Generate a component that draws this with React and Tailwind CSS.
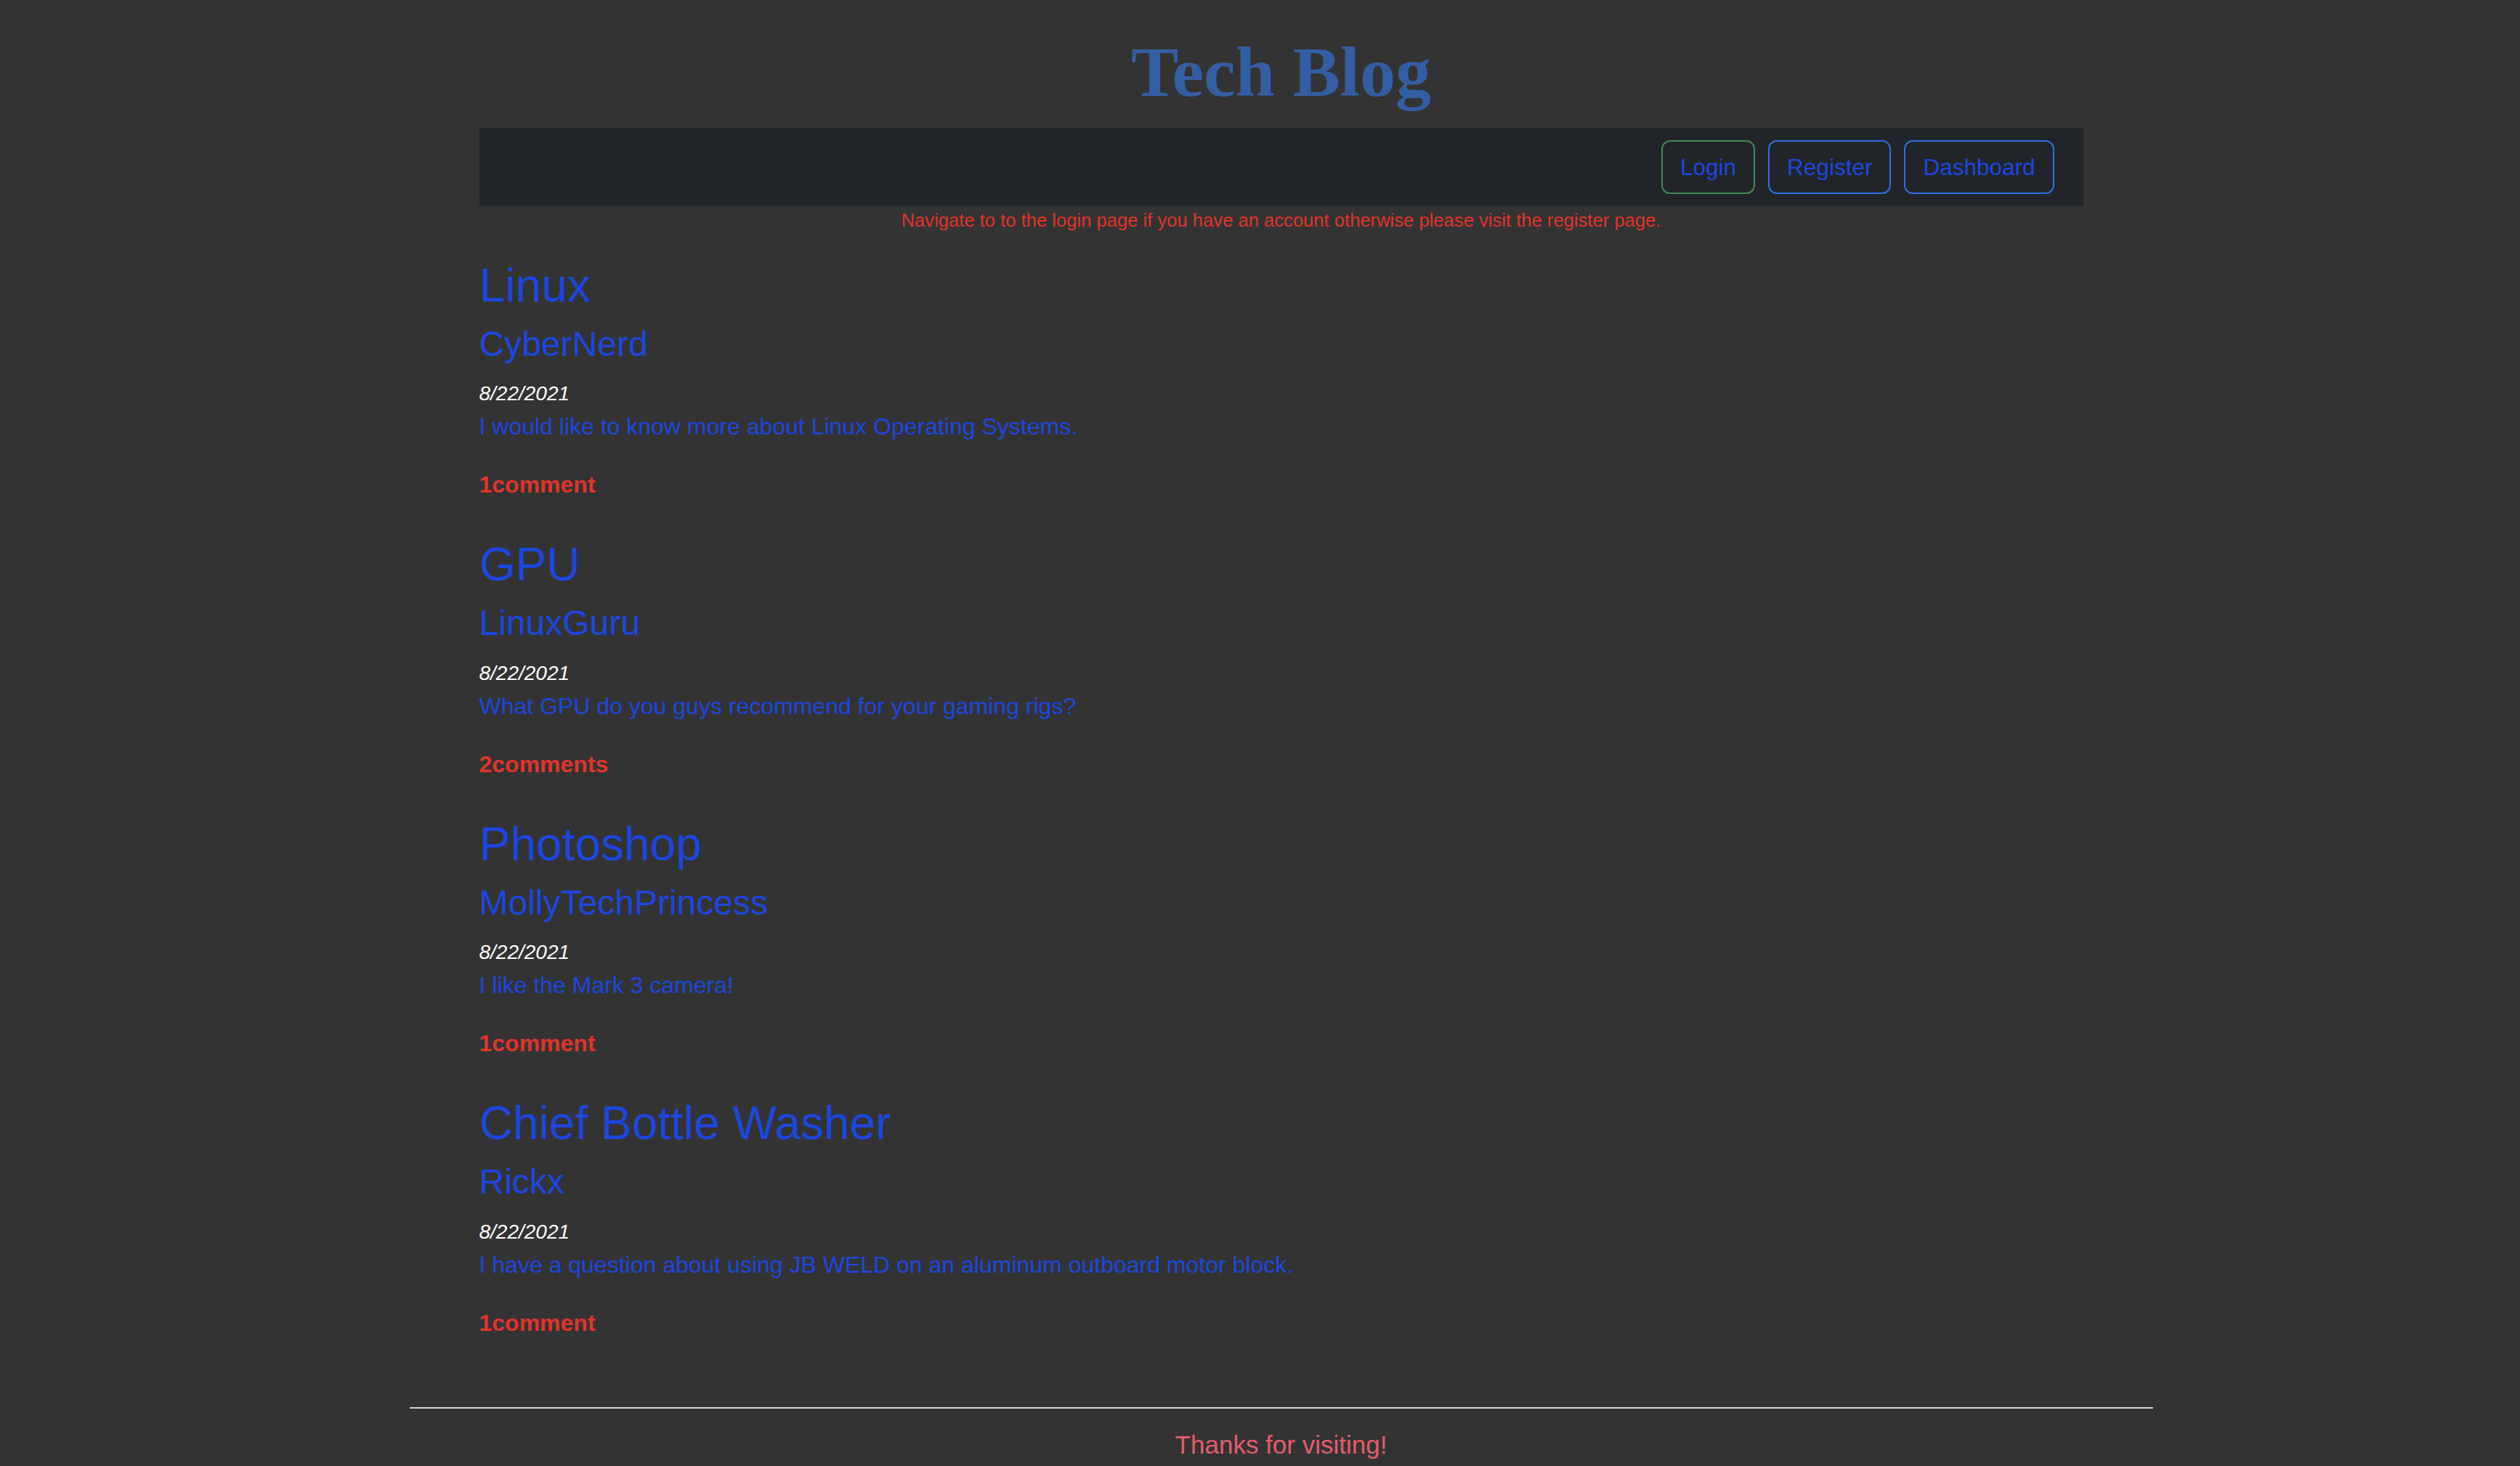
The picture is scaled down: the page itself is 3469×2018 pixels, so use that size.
const posts = [
  {
    id: 1,
    title: "Linux",
    user: "CyberNerd",
    date: "8/22/2021",
    body: "I would like to know more about Linux Operating Systems.",
    comments: 1,
  },
  {
    id: 2,
    title: "GPU",
    user: "LinuxGuru",
    date: "8/22/2021",
    body: "What GPU do you guys recommend for your gaming rigs?",
    comments: 2,
  },
  {
    id: 3,
    title: "Photoshop",
    user: "MollyTechPrincess",
    date: "8/22/2021",
    body: "I like the Mark 3 camera!",
    comments: 1,
  },
  {
    id: 4,
    title: "Chief Bottle Washer",
    user: "Rickx",
    date: "8/22/2021",
    body: "I have a question about using JB WELD on an aluminum outboard motor block.",
    comments: 1,
  },
];

function App() {
  return (
    <div className="min-h-screen bg-[#333333] pl-[58px] font-['Liberation_Sans',Arial,sans-serif]">
      <h1 className="pt-[40px] text-center font-['Liberation_Serif','Times_New_Roman',serif] text-[98px] font-bold leading-[118px] text-[#345ea3]">
        Tech Blog
      </h1>

      <div className="mx-auto mt-[18px] w-[2208px]">
        <nav className="flex h-[107px] items-center justify-end gap-[18px] bg-[#212529] pr-[40px]">
          <button className="rounded-[12px] border-2 border-[#3f8a55] px-[24px] py-[11px] text-[31.5px] leading-[48px] text-[#1d47e0]">
            Login
          </button>
          <button className="rounded-[12px] border-2 border-[#2f6ee6] px-[24px] py-[11px] text-[31.5px] leading-[48px] text-[#1d47e0]">
            Register
          </button>
          <button className="rounded-[12px] border-2 border-[#2f6ee6] px-[24px] py-[11px] text-[31.5px] leading-[48px] text-[#1d47e0]">
            Dashboard
          </button>
        </nav>

        <p className="text-center text-[25.6px] leading-[40.5px] text-[#e1342b]">
          Navigate to to the login page if you have an account otherwise please visit the register page.
        </p>

        <div className="mt-[28.5px] flex flex-col gap-[45px]">
          {posts.map((post) => (
            <article key={post.id}>
              <h2 className="mb-[13px] pt-[3px] text-[64px] leading-[1.2] text-[#1d47e0]">
                {post.title}
              </h2>
              <h3 className="mb-[19px] text-[48px] leading-[1.2] text-[#1d47e0]">
                {post.user}
              </h3>
              <p className="text-[28px] italic leading-[42px] text-white">
                {post.date}
              </p>
              <p className="text-[32px] leading-[48px] text-[#1d47e0]">
                {post.body}
              </p>
              <p className="mt-[32px] text-[32px] font-bold leading-[48px] text-[#e1342b]">
                {post.comments}
                {post.comments === 1 ? "comment" : "comments"}
              </p>
            </article>
          ))}
        </div>
      </div>

      <footer className="mt-[92px]">
        <hr className="mx-auto w-[2400px] border-t-2 border-[#d4d4d4]" />
        <p className="pt-[24.5px] text-center text-[35px] leading-[52.5px] text-[#e35d6a]">
          Thanks for visiting!
        </p>
      </footer>
    </div>
  );
}

export default App;
